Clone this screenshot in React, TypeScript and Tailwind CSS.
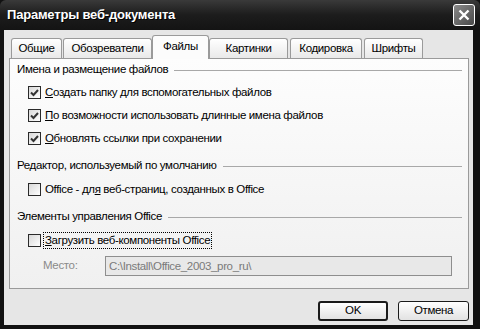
import { useState } from 'react';

type Tab = {
	label: string;
	w: string;
	ml: string;
};

const tabs: Tab[] = [
	{ label: 'Общие', w: 'w-[51px]', ml: 'ml-[2px]' },
	{ label: 'Обозреватели', w: 'w-[89px]', ml: 'ml-[1px]' },
	{ label: 'Файлы', w: 'w-[57px]', ml: 'ml-0' },
	{ label: 'Картинки', w: 'w-[79px]', ml: 'ml-0' },
	{ label: 'Кодировка', w: 'w-[72px]', ml: 'ml-[2px]' },
	{ label: 'Шрифты', w: 'w-[59px]', ml: 'ml-[2px]' },
];

function CheckBox({ checked }: { checked: boolean }) {
	return (
		<div className="w-[13px] h-[13px] border border-[#2a2a2a] bg-gradient-to-br from-[#d8d8d8] to-white flex items-center justify-center shrink-0">
			{checked && (
				<svg width="9" height="9" viewBox="0 0 9 9">
					<path d="M1 4.5 L3.5 7 L8 2" stroke="#333" strokeWidth="2" fill="none" />
				</svg>
			)}
		</div>
	);
}

function GroupTitle({ text, className }: { text: string; className?: string }) {
	return (
		<div className={`flex items-center h-[16px] pl-[7px] pr-[6px] ${className ?? ''}`}>
			<span>{text}</span>
			<div className="flex-1 h-px bg-[#a8a8a8] ml-[6px]" />
		</div>
	);
}

function App(): JSX.Element {
	const [active, setActive] = useState<string>('Файлы');
	const [opts, setOpts] = useState<boolean[]>([true, true, true, false, false]);

	const toggle = (i: number) => {
		const next = [...opts];
		next[i] = !next[i];
		setOpts(next);
	};

	const Row = ({ i, children, focus, className }: { i: number; children: React.ReactNode; focus?: boolean; className?: string }) => (
		<div className={`flex items-center h-[23px] pl-[18px] cursor-default ${className ?? ''}`} onClick={() => toggle(i)}>
			<CheckBox checked={opts[i]} />
			<span className={`ml-[2px] leading-[15px] px-[1px] ${focus ? 'border border-dotted border-black' : 'border border-transparent'}`}>
				{children}
			</span>
		</div>
	);

	return (
		<div className="w-[480px] h-[329px] bg-[#111] flex flex-col font-['Liberation_Sans',Arial,sans-serif] text-[11.5px] tracking-[-0.35px] text-black overflow-hidden">
			{/* заголовок */}
			<div className="h-[30px] flex items-center justify-between pl-[7px] pr-[5px] bg-gradient-to-b from-[#3a3a3a] via-[#1c1c1c] to-[#141414] rounded-t-[6px]">
				<span className="text-white font-bold text-[13px] tracking-[-0.2px] [text-shadow:1px_1px_0_#000]">Параметры веб-документа</span>
				<div className="w-[22px] h-[22px] rounded-[3px] border border-white bg-gradient-to-br from-[#8a8a8a] to-[#4a4a4a] flex items-center justify-center">
					<svg width="12" height="12" viewBox="0 0 12 12">
						<path d="M1.5 1.5 L10.5 10.5 M10.5 1.5 L1.5 10.5" stroke="white" strokeWidth="2.4" />
					</svg>
				</div>
			</div>

			{/* тело окна */}
			<div className="flex-1 ml-[4px] mr-[7px] mb-[4px] bg-[#e6e6e6] pl-[5px] pr-[4px] pt-[5px] flex flex-col">
				<div className="flex items-end h-[23px]">
					{tabs.map((t) => {
						const sel = t.label === active;
						return (
							<div
								key={t.label}
								onClick={() => setActive(t.label)}
								className={`${t.w} ${t.ml} flex items-center justify-center rounded-t-[3px] border border-b-0 border-[#9a9a9a] cursor-default ${
									sel
										? 'h-[24px] -mb-[1px] bg-[#fcfcfc] z-10 relative pb-[2px]'
										: 'h-[20px] bg-gradient-to-b from-white to-[#e9e9e9]'
								}`}
							>
								{t.label}
							</div>
						);
					})}
				</div>

				<div className="h-[231px] border border-[#9a9a9a] bg-gradient-to-b from-[#fdfdfd] to-[#f0f0f0] pt-[3px] flex flex-col">
					<GroupTitle text="Имена и размещение файлов" />
					<Row i={0} className="mt-[3px]">
						<u>С</u>оздать папку для вспомогательных файлов
					</Row>
					<Row i={1}>
						<u>П</u>о возможности использовать длинные имена файлов
					</Row>
					<Row i={2}>
						<u>О</u>бновлять ссылки при сохранении
					</Row>

					<GroupTitle text="Редактор, используемый по умолчанию" className="mt-[8px]" />
					<Row i={3} className="mt-[4px]">
						Office - дл<u>я</u> веб-страниц, созданных в Office
					</Row>

					<GroupTitle text="Элементы управления Office" className="mt-[8px]" />
					<Row i={4} className="mt-[4px]" focus>
						<u>З</u>агрузить веб-компоненты Office
					</Row>

					<div className="flex items-center mt-[4px] pl-[33px] pr-[16px]">
						<span className="w-[62px] text-[#8a8a8a]">Место:</span>
						<input
							disabled
							value="C:\Install\Office_2003_pro_ru\"
							className="flex-1 h-[20px] border border-[#8e8e8e] bg-[#e8e8e8] text-[#7a7a7a] px-[3px] text-[11.5px] tracking-[-0.35px] font-['Liberation_Sans',Arial,sans-serif]"
						/>
					</div>
				</div>

				<div className="flex justify-end gap-[10px] mt-[12px]">
					<button className="w-[70px] h-[20px] rounded-[3px] border-2 border-[#1a1a1a] bg-gradient-to-b from-white to-[#e2e2e2] flex items-center justify-center">
						OK
					</button>
					<button className="w-[71px] h-[20px] rounded-[3px] border border-[#1a1a1a] bg-gradient-to-b from-white to-[#e2e2e2] flex items-center justify-center">
						Отмена
					</button>
				</div>
			</div>
		</div>
	);
}

export default App;
